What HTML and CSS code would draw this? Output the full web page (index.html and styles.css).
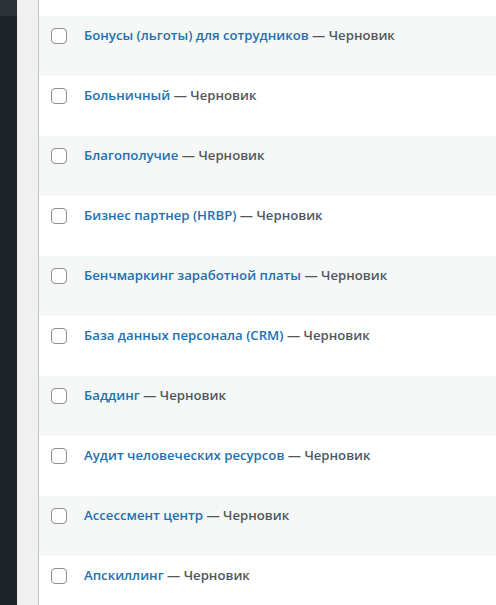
FILE: index.html
```html
<!DOCTYPE html>
<html lang="ru">
<head>
<meta charset="utf-8">
<link rel="stylesheet" href="styles.css">
</head>
<body>
<div class="admin">
  <div class="sidebar"><div class="sidebar-top"></div></div>
  <div class="gutter"></div>
  <div class="table">
    <div class="row row-white row-partial"></div>
    <div class="row row-alt"><span class="cb"></span><span class="title"><a href="#">Бонусы (льготы) для сотрудников</a> — Черновик</span></div>
    <div class="row row-white"><span class="cb"></span><span class="title"><a href="#">Больничный</a> — Черновик</span></div>
    <div class="row row-alt"><span class="cb"></span><span class="title"><a href="#">Благополучие</a> — Черновик</span></div>
    <div class="row row-white"><span class="cb"></span><span class="title"><a href="#">Бизнес партнер (HRBP)</a> — Черновик</span></div>
    <div class="row row-alt"><span class="cb"></span><span class="title"><a href="#">Бенчмаркинг заработной платы</a> — Черновик</span></div>
    <div class="row row-white"><span class="cb"></span><span class="title"><a href="#">База данных персонала (CRM)</a> — Черновик</span></div>
    <div class="row row-alt"><span class="cb"></span><span class="title"><a href="#">Баддинг</a> — Черновик</span></div>
    <div class="row row-white"><span class="cb"></span><span class="title"><a href="#">Аудит человеческих ресурсов</a> — Черновик</span></div>
    <div class="row row-alt"><span class="cb"></span><span class="title"><a href="#">Ассессмент центр</a> — Черновик</span></div>
    <div class="row row-white"><span class="cb"></span><span class="title"><a href="#">Апскиллинг</a> — Черновик</span></div>
  </div>
</div>
</body>
</html>
```
FILE: styles.css
```css
html, body {
  margin: 0;
  padding: 0;
  height: 605px;
  overflow: hidden;
  background: #f0f0f1;
}
.admin {
  display: flex;
  height: 605px;
  font-family: "Open Sans", "Noto Sans", sans-serif;
}
.sidebar {
  width: 17px;
  flex: none;
  background: #1d2327;
}
.sidebar-top {
  height: 16px;
  background: #2c3338;
}
.gutter {
  width: 21px;
  flex: none;
  background: #f0f0f1;
}
.table {
  flex: 1;
  border-left: 1px solid #c3c4c7;
  background: #fff;
  display: flex;
  flex-direction: column;
}
.row {
  height: 60px;
  flex: none;
  display: flex;
  align-items: flex-start;
  box-sizing: border-box;
  padding: 12px 0 0 12px;
}
.row-partial {
  height: 16px;
  padding: 0;
}
.row-alt { background: #f6f7f7; }
.row-white { background: #fff; }
.cb {
  width: 16px;
  height: 16px;
  box-sizing: border-box;
  border: 1px solid #8c8f94;
  border-radius: 4px;
  background: #fff;
  flex: none;
}
.title {
  margin-left: 17px;
  margin-top: -2px;
  font-size: 13.2px;
  font-weight: 600;
  line-height: 18px;
  color: #50575e;
  white-space: nowrap;
}
.title a {
  color: #2271b1;
  text-decoration: none;
}
```
